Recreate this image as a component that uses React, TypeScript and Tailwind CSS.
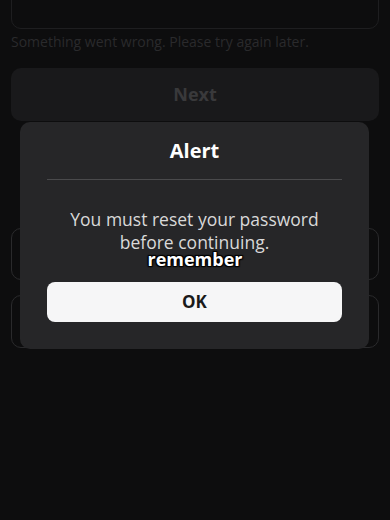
import React from "react";

export default function App() {
  return (
    <div
      className="relative w-[390px] h-[520px] overflow-hidden bg-[#0d0d0e]"
      style={{ fontFamily: '"Open Sans", "Noto Sans", sans-serif' }}
    >
      <div className="flex flex-col px-[11px]">
        <div className="-mt-[24px] h-[53px] rounded-[10px] border border-[#1e1e20]" />
        <p className="mt-[3px] text-[14px] leading-[20px] text-[#2a2a2c]">
          Something went wrong. Please try again later.
        </p>
        <button className="mt-[16px] h-[53px] rounded-[10px] bg-[#19191b] text-[18px] font-bold text-[#39393b]">
          Next
        </button>
        <div className="mt-[107px] h-[52px] rounded-[10px] border border-[#2a2a2c]" />
        <div className="mt-[15px] h-[53px] rounded-[10px] border border-[#2a2a2c]" />
      </div>

      <div className="absolute left-[20px] top-[122px] w-[349px] rounded-[10px] bg-[#262628] px-[27px] pt-[15px] pb-[27px]">
        <h2 className="text-center text-[20px] leading-[28px] font-bold text-white">Alert</h2>
        <div className="mt-[14px] h-px bg-[#4a4a4c]" />
        <p className="mt-[28px] text-center text-[17.5px] leading-[23px] text-[#d9d9d9]">
          You must reset your password
          <br />
          before continuing.
        </p>
        <button className="mt-[28px] h-[40px] w-full rounded-[8px] bg-[#f6f6f7] text-[17px] font-bold text-[#1a1a1a]">
          OK
        </button>
      </div>

      <div
        className="absolute left-0 right-0 top-[247px] text-center text-[18px] leading-[24px] font-bold text-white"
        style={{ textShadow: "0 0 2px #000, 1px 1px 1px #000, -1px -1px 1px #000, 1px -1px 1px #000, -1px 1px 1px #000" }}
      >
        remember
      </div>
    </div>
  );
}
